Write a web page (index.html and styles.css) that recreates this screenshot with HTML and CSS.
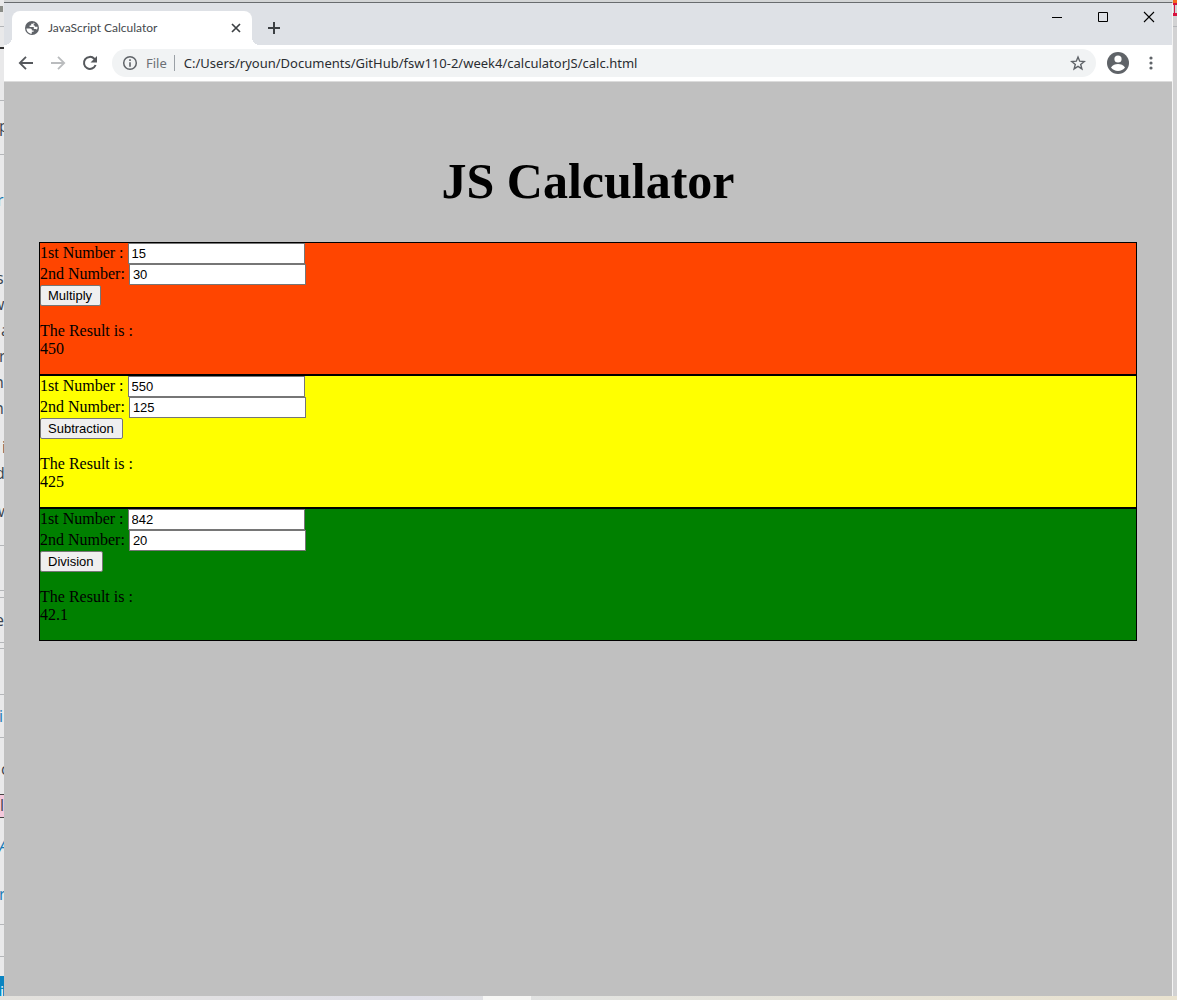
FILE: index.html
```html
<!DOCTYPE html>
<html lang="en">
<head>
<meta charset="utf-8">
<title>JavaScript Calculator</title>
<link rel="stylesheet" href="styles.css">
</head>
<body>
<div class="desktop">
  <svg class="behind" width="4" height="1000" aria-hidden="true">
    <rect width="4" height="1000" fill="#e9e9ea"/>
    <path d="M0 6h3v6H0z" fill="#8b8d88"/>
    <path d="M0 26.500h4M0 100.500h4M0 154.500h4M0 545.500h4M0 590.500h4M0 597.500h4M0 642.500h4M0 648.500h4M0 694.500h4M0 737.500h4M0 924.500h4M0 956.500h4" stroke="#b4b6b9"/>
    <path d="M0 48h4" stroke="#333" stroke-width="2"/>
    <rect y="795" width="4" height="22" fill="#f3c9dc"/>
    <path d="M0 794.500h4M0 817.500h4" stroke="#444"/>
    <rect y="976" width="4" height="20" fill="#0a84c1"/>
    <g class="page-text">
      <text x="-1" y="132">p</text>
      <text x="-3" y="206" class="link">r</text>
      <text x="-4" y="284">s</text>
      <text x="-8" y="310">w</text>
      <text x="1" y="336">a</text>
      <text x="-1" y="362">r</text>
      <text x="-6" y="388">n</text>
      <text x="-6" y="414">n</text>
      <text x="2" y="453">i</text>
      <text x="-5" y="479">d</text>
      <text x="-2" y="517">w</text>
      <text x="-5" y="626">e</text>
      <text x="-1" y="722" class="link">i</text>
      <text x="1" y="775">c</text>
      <text x="0" y="811">l</text>
      <text x="-1" y="852" class="link slanted">A</text>
      <text x="-1" y="900" class="link">r</text>
      <text x="0" y="998" class="inverse">i</text>
    </g>
  </svg>
  <svg class="behind-right" width="4" height="1000" aria-hidden="true">
    <rect width="4" height="1000" fill="#d2d2d3"/>
    <path d="M0 0h4v3H0z" fill="#f36a1c"/>
    <path d="M0 3h4v2H2v8h2v3H0v-3h1V5H0z" fill="#d8123f"/>
    <path d="M0 26.500h4" stroke="#b4b6b9"/>
  </svg>

  <div class="window">
    <header class="titlebar">
      <div class="tab">
        <svg width="16" height="16" viewBox="0 0 16 16"><circle cx="8" cy="8" r="7" fill="#5f6368"/><path d="M2.400 8.400h3.800c1.700 0 1.700 1.200 1.700 2h1.700v1.300H7.800v2C4.800 13.600 2.600 11.400 2.400 8.400zM9.500 2.500v1.200H7.200v1.800H5.600v1.400h4.200v2h1.900c.6 0 1 .3 1.200.8.600-1.100.8-2 .6-3h-1.600c-1 0-1.300-.6-1.300-1.300h-.9V4h1.200z" fill="#fff"/></svg>
        <span class="tab-title">JavaScript Calculator</span>
        <button class="icon-button tab-close" type="button" aria-label="Close tab"><svg width="16" height="16" viewBox="0 0 16 16"><path d="M4 4l8 8M12 4l-8 8" stroke="#3c4043" stroke-width="1.700"/></svg></button>
      </div>
      <button class="icon-button new-tab" type="button" aria-label="New tab"><svg width="16" height="16" viewBox="0 0 16 16"><path d="M8 2v12M2 8h12" stroke="#3c4043" stroke-width="2"/></svg></button>
      <div class="window-controls">
        <button class="icon-button" type="button" aria-label="Minimize"><svg width="12" height="12" viewBox="0 0 12 12"><path d="M1 6.500h10" stroke="#000"/></svg></button>
        <button class="icon-button" type="button" aria-label="Maximize"><svg width="12" height="12" viewBox="0 0 12 12"><path d="M1.500 1.500h9v9h-9z" fill="none" stroke="#000"/></svg></button>
        <button class="icon-button" type="button" aria-label="Close"><svg width="12" height="12" viewBox="0 0 12 12"><path d="M1 1l10 10M11 1L1 11" stroke="#000" stroke-width="1.100"/></svg></button>
      </div>
    </header>

    <nav class="toolbar" aria-label="Browser toolbar">
      <button class="icon-button" type="button" aria-label="Back"><svg width="16" height="16" viewBox="0 0 16 16"><path d="M15 8H2.500M8 1.800L1.800 8 8 14.200" fill="none" stroke="#55585c" stroke-width="1.800"/></svg></button>
      <button class="icon-button" type="button" aria-label="Forward"><svg width="16" height="16" viewBox="0 0 16 16"><path d="M1 8h12.500M8 1.800L14.200 8 8 14.200" fill="none" stroke="#babcbe" stroke-width="1.800"/></svg></button>
      <button class="icon-button" type="button" aria-label="Reload"><svg width="16" height="16" viewBox="0 0 16 16"><path d="M13.600 10A6 6 0 1 1 12.300 3.700L14 5.500" fill="none" stroke="#55585c" stroke-width="2"/><path d="M15 1v6.500H8.500z" fill="#55585c"/></svg></button>
      <div class="omnibox">
        <svg width="16" height="16" viewBox="0 0 16 16"><circle cx="8" cy="8" r="6.300" fill="none" stroke="#5f6368" stroke-width="1.500"/><path d="M7.200 4.300h1.600v1.600H7.200zM7.200 7.200h1.600v4.500H7.200z" fill="#5f6368"/></svg>
        <span class="scheme">File</span>
        <input class="address" type="text" aria-label="Address" value="C:/Users/ryoun/Documents/GitHub/fsw110-2/week4/calculatorJS/calc.html">
        <button class="icon-button" type="button" aria-label="Bookmark"><svg width="16" height="16" viewBox="0 0 16 16"><path d="M8 2l1.700 4.200 4.500.3-3.500 2.900 1.200 4.500L8 11.400l-3.900 2.500 1.200-4.500L1.800 6.500l4.500-.3z" fill="none" stroke="#5f6368" stroke-width="1.400"/></svg></button>
      </div>
      <button class="icon-button profile" type="button" aria-label="Profile"><svg width="22" height="22" viewBox="0 0 22 22"><circle cx="11" cy="11" r="11" fill="#5f6368"/><circle cx="11" cy="7" r="3.600" fill="#fff"/><path d="M4 15.500c1.200-2.400 4.500-3.500 7-3.500s5.800 1.100 7 3.500c-1.600 2.200-4.200 3.600-7 3.600s-5.400-1.400-7-3.600z" fill="#fff"/></svg></button>
      <button class="icon-button menu" type="button" aria-label="Menu"><svg width="16" height="16" viewBox="0 0 16 16"><g fill="#5f6368"><circle cx="8" cy="3" r="1.600"/><circle cx="8" cy="8" r="1.600"/><circle cx="8" cy="13" r="1.600"/></g></svg></button>
    </nav>

    <main class="page">
      <h1>JS Calculator</h1>
      <section class="calc multiply">
        <div class="row"><label for="m1">1st Number :</label> <input id="m1" type="text" value="15"></div>
        <div class="row"><label for="m2">2nd Number:</label> <input id="m2" type="text" value="30"></div>
        <div class="row"><button type="button">Multiply</button></div>
        <p>The Result is :<br>450</p>
      </section>
      <section class="calc subtract">
        <div class="row"><label for="s1">1st Number :</label> <input id="s1" type="text" value="550"></div>
        <div class="row"><label for="s2">2nd Number:</label> <input id="s2" type="text" value="125"></div>
        <div class="row"><button type="button">Subtraction</button></div>
        <p>The Result is :<br>425</p>
      </section>
      <section class="calc divide">
        <div class="row"><label for="d1">1st Number :</label> <input id="d1" type="text" value="842"></div>
        <div class="row"><label for="d2">2nd Number:</label> <input id="d2" type="text" value="20"></div>
        <div class="row"><button type="button">Division</button></div>
        <p>The Result is :<br>42.1</p>
      </section>
    </main>
  </div>
  <footer class="taskbar"><span class="taskbar-item"></span></footer>
</div>
</body>
</html>
```
FILE: styles.css
```css
* {
  box-sizing: border-box;
}

body {
  margin: 0;
  font-family: "Liberation Serif", serif;
}

.desktop {
  position: relative;
  display: flex;
  flex-direction: column;
  min-height: 100vh;
  padding-top: 2px;
  background: #d3d5d6;
}

/* Slivers of the window behind the browser */
.behind,
.behind-right {
  position: absolute;
  top: 0;
  overflow: hidden;
}

.behind {
  left: 0;
}

.behind-right {
  right: 0;
}

.page-text {
  font: 16px "Open Sans", sans-serif;
  fill: #3b4550;
}

.page-text .link {
  fill: #1779b5;
}

.page-text .slanted {
  font-style: italic;
}

.page-text .inverse {
  fill: #fff;
}

.window {
  display: flex;
  flex: 1;
  flex-direction: column;
  margin: 0 4px;
  border-top: 1px solid #686b6e;
  border-right: 1px solid #f4f4f4;
}

svg {
  display: block;
}

.icon-button {
  display: flex;
  flex: none;
  align-items: center;
  justify-content: center;
  padding: 0;
  border: 0;
  background: none;
}

.titlebar {
  display: flex;
  align-items: flex-end;
  height: 42px;
  padding-left: 8px;
  background: #dee1e6;
}

.tab {
  position: relative;
  display: flex;
  align-items: center;
  gap: 8px;
  width: 240px;
  height: 34px;
  padding: 0 8px 0 12px;
  border-radius: 8px 8px 0 0;
  background: #fff;
}

.tab::before,
.tab::after {
  position: absolute;
  bottom: 0;
  width: 8px;
  height: 8px;
  content: "";
}

.tab::before {
  left: -8px;
  background: radial-gradient(circle at 0 0, #dee1e6 8px, #fff 8px);
}

.tab::after {
  right: -8px;
  background: radial-gradient(circle at 100% 0, #dee1e6 8px, #fff 8px);
}

.tab-title {
  flex: 1;
  color: #45494d;
  font: 12px/16px Lato, sans-serif;
  white-space: nowrap;
}

.new-tab {
  height: 34px;
  margin-left: 14px;
}

.window-controls {
  display: flex;
  align-self: flex-start;
  margin-left: auto;
}

.window-controls .icon-button {
  width: 46px;
  height: 28px;
}

.toolbar {
  display: flex;
  align-items: center;
  gap: 16px;
  height: 37px;
  padding: 0 13px 0 14px;
  border-bottom: 1px solid #dcdcdc;
  background: #fff;
}

.omnibox {
  display: flex;
  flex: 1;
  align-items: center;
  height: 28px;
  margin-left: -2px;
  padding: 0 10px;
  border-radius: 14px;
  background: #f1f3f4;
}

.scheme {
  margin-left: 8px;
  padding-right: 7px;
  border-right: 1px solid #9aa0a6;
  color: #6c7074;
  font: 13px/16px "Noto Sans", sans-serif;
}

.address {
  flex: 1;
  min-width: 0;
  padding: 0 9px;
  border: 0;
  background: none;
  color: #2a2d31;
  font: 13px/18px "Noto Sans", sans-serif;
}

.profile {
  margin-left: -5px;
}

.menu {
  margin-left: -2px;
}

.page {
  flex: 1;
  padding: 71px 35px 0;
  background: #c0c0c0;
  color: #000;
}

h1 {
  margin: 0 0 32px;
  font-size: 50px;
  line-height: 57px;
  text-align: center;
}

.calc {
  border: 1px solid #000;
  font-size: 16px;
  line-height: 18px;
}

.calc .row {
  display: flex;
  align-items: flex-start;
  gap: 4px;
  height: 21px;
}

.calc label {
  line-height: 20px;
}

.calc input {
  width: 177px;
  height: 21px;
  padding: 1px 3px;
  border: 1px solid #767676;
  background: #fff;
  color: #000;
  font: 13px "Liberation Sans", sans-serif;
}

.calc button {
  height: 21px;
  padding: 1px 8px 1px 7px;
  border: 1px solid #767676;
  border-radius: 2px;
  background: #efefef;
  color: #000;
  font: 13px "Liberation Sans", sans-serif;
}

.calc p {
  margin: 16px 0;
}

.multiply {
  background: #ff4500;
}

.subtract {
  background: #ff0;
}

.divide {
  background: #008000;
}

.taskbar {
  position: relative;
  display: flex;
  height: 4px;
  padding-left: 41%;
  background: linear-gradient(90deg, #e3e1dc, #dfdfe8 35%, #e2e3e0 48%, #e9e2cf);
}

.taskbar-item {
  width: 48px;
  background: #f7f7f5;
}
```
